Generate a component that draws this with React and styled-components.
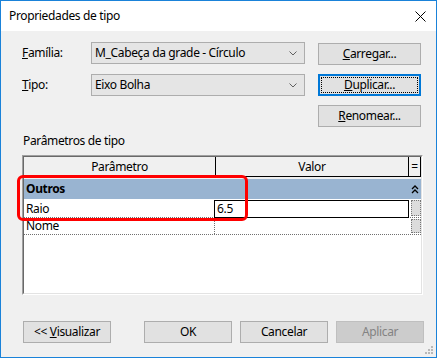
import React from 'react';
import styled, { createGlobalStyle } from 'styled-components';

const GlobalStyle = createGlobalStyle`
  html, body { margin: 0; padding: 0; background: #f0f0f0; }
  body {
    font-family: "Noto Sans", "Segoe UI", sans-serif;
    font-size: 12px;
    letter-spacing: -0.35px;
    color: #000;
  }
  #root { width: 437px; height: 358px; }
  * { box-sizing: border-box; }
`;

const Window = styled.div`
  position: relative;
  width: 437px;
  height: 358px;
  border: 1px solid #1a82d9;
  background: #f0f0f0;
  display: flex;
  flex-direction: column;
`;

const TitleBar = styled.div`
  height: 30px;
  flex: none;
  background: #fff;
  display: flex;
  align-items: center;
  justify-content: space-between;
  padding: 0 10px 0 8px;
`;

const Title = styled.span`
  font-size: 12px;
  line-height: 16px;
`;

const CloseIcon = styled.svg`
  width: 11px;
  height: 11px;
  display: block;
`;

const Body = styled.div`
  flex: 1;
  display: flex;
  flex-direction: column;
  align-items: flex-start;
  padding: 11px 0 0 21px;
`;

const TopRows = styled.div`
  display: flex;
  flex-direction: column;
  gap: 10px;
  width: 399px;
`;

const FormRow = styled.div`
  display: flex;
  align-items: center;
  height: 22px;
  margin-top: ${p => p.$mt || 0}px;
`;

const Label = styled.span`
  flex: none;
  width: 69px;
  line-height: 16px;
`;

const Combo = styled.div`
  flex: none;
  width: 214px;
  height: 22px;
  border: 1px solid #adadad;
  background: #e5e5e5;
  display: flex;
  align-items: center;
  justify-content: space-between;
  padding: 0 7px 0 3px;
  line-height: 16px;
  white-space: nowrap;
  overflow: hidden;
`;

const Chevron = styled.svg`
  flex: none;
  width: 8px;
  height: 5px;
  display: block;
`;

const Button = styled.button`
  flex: none;
  height: 22px;
  width: ${p => p.$w || 103}px;
  margin-left: ${p => p.$ml || 0}px;
  margin-top: ${p => p.$mt || 0}px;
  padding: 0;
  font: inherit;
  letter-spacing: inherit;
  line-height: 16px;
  color: ${p => (p.$disabled ? '#838383' : '#000')};
  background: ${p => (p.$disabled ? '#cccccc' : '#e1e1e1')};
  border: 1px solid ${p => (p.$disabled ? '#bfbfbf' : p.$default ? '#0078d7' : '#adadad')};
  box-shadow: ${p => (p.$default ? 'inset 0 0 0 1px #0078d7' : 'none')};
  position: relative;
  display: flex;
  align-items: center;
  justify-content: center;
  cursor: default;
`;

const FocusRing = styled.span`
  position: absolute;
  inset: 2px;
  border: 1px dotted #000;
  pointer-events: none;
`;

const SectionLabel = styled.div`
  line-height: 16px;
  margin: 6px 0 6px 1px;
`;

const TableFrame = styled.div`
  position: relative;
  width: 401px;
  height: 140px;
  border: 1px solid;
  border-color: #a0a0a0 #ffffff #ffffff #a0a0a0;
`;

const TableInner = styled.div`
  height: 100%;
  border: 1px solid;
  border-color: #696969 #e3e3e3 #e3e3e3 #696969;
  background: #fff;
  display: flex;
  flex-direction: column;
`;

const HeaderRow = styled.div`
  display: grid;
  grid-template-columns: 192px 193px 12px;
  height: 20px;
  background: #f0f0f0;
  flex: none;
`;

const HeaderCell = styled.div`
  display: flex;
  align-items: center;
  justify-content: center;
  line-height: 16px;
  border-bottom: 1px solid #000;
  border-right: 1px solid #000;
`;

const Gap = styled.div`
  height: 2px;
  background: #f0f0f0;
  flex: none;
`;

const GroupRow = styled.div`
  display: grid;
  grid-template-columns: 385px 12px;
  height: 20px;
  background: #99b4d1;
  flex: none;
  align-items: center;
`;

const GroupTitle = styled.span`
  font-weight: 700;
  padding-left: 2px;
  line-height: 16px;
`;

const Collapse = styled.svg`
  width: 8px;
  height: 9px;
  display: block;
  margin-left: 2px;
`;

const DataRow = styled.div`
  display: grid;
  grid-template-columns: 191px 194px 12px;
  height: ${p => p.$h}px;
  flex: none;
  border-bottom: 1px dotted #707070;
`;

const NameCell = styled.div`
  display: flex;
  align-items: center;
  padding-left: 2px;
  line-height: 16px;
  border-right: ${p => (p.$divider ? '1px dotted #707070' : '1px solid transparent')};
`;

const ValueCell = styled.div`
  display: flex;
  align-items: center;
  line-height: 16px;
  padding-left: 2px;
  ${p => p.$editing && `
    border: 1px solid #000;
    margin: 1px 0 0 -1px;
    height: 18px;
  `}
`;

const Gutter = styled.div`
  margin: 1px 0 1px 2px;
  width: 10px;
  height: ${p => p.$h}px;
  background: #dcdcdc;
  border: 1px dotted #777;
`;

const Highlight = styled.div`
  position: absolute;
  left: -6px;
  top: 19px;
  width: 231px;
  height: 46px;
  border: 3px solid #ff0000;
  border-radius: 6px;
  pointer-events: none;
`;

const Footer = styled.div`
  display: flex;
  margin-top: 26px;
  padding-left: 1px;
`;

const Grip = styled.svg`
  position: absolute;
  right: 3px;
  bottom: 3px;
  width: 8px;
  height: 8px;
`;

function ComboArrow() {
  return (
    <Chevron viewBox="0 0 8 5">
      <path d="M0.5 0.5 L4 4 L7.5 0.5" stroke="#606060" strokeWidth="1" fill="none" />
    </Chevron>
  );
}

export default function App() {
  return (
    <>
      <GlobalStyle />
      <Window>
        <TitleBar>
          <Title>Propriedades de tipo</Title>
          <CloseIcon viewBox="0 0 11 11">
            <path d="M0.5 0.5 L10.5 10.5 M10.5 0.5 L0.5 10.5" stroke="#000" strokeWidth="1" fill="none" />
          </CloseIcon>
        </TitleBar>
        <Body>
          <TopRows>
            <FormRow>
              <Label><u>F</u>amília:</Label>
              <Combo>
                <span>M_Cabeça da grade - Círculo</span>
                <ComboArrow />
              </Combo>
              <Button $ml={13} $mt={2}><span><u>C</u>arregar...</span></Button>
            </FormRow>
            <FormRow>
              <Label><u>T</u>ipo:</Label>
              <Combo>
                <span>Eixo Bolha</span>
                <ComboArrow />
              </Combo>
              <Button $ml={13} $default><FocusRing /><span><u>D</u>uplicar...</span></Button>
            </FormRow>
            <FormRow $mt={-1}>
              <Button $ml={296}><span><u>R</u>enomear...</span></Button>
            </FormRow>
          </TopRows>

          <SectionLabel>Parâmetros de tipo</SectionLabel>

          <TableFrame>
            <TableInner>
              <HeaderRow>
                <HeaderCell>Parâmetro</HeaderCell>
                <HeaderCell>Valor</HeaderCell>
                <HeaderCell>=</HeaderCell>
              </HeaderRow>
              <Gap />
              <GroupRow>
                <GroupTitle>Outros</GroupTitle>
                <Collapse viewBox="0 0 8 9">
                  <path d="M1 4 L4 1 L7 4 M1 8 L4 5 L7 8" stroke="#000" strokeWidth="1.3" fill="none" />
                </Collapse>
              </GroupRow>
              <DataRow $h={19}>
                <NameCell>Raio</NameCell>
                <ValueCell $editing>6.5</ValueCell>
                <Gutter $h={16} />
              </DataRow>
              <DataRow $h={17}>
                <NameCell $divider>Nome</NameCell>
                <ValueCell />
                <Gutter $h={14} />
              </DataRow>
            </TableInner>
            <Highlight />
          </TableFrame>

          <Footer>
            <Button $w={88}><span>&lt;&lt; <u>V</u>isualizar</span></Button>
            <Button $w={88} $ml={33}>OK</Button>
            <Button $w={88} $ml={8}>Cancelar</Button>
            <Button $w={88} $ml={8} $disabled>Aplicar</Button>
          </Footer>
        </Body>
        <Grip viewBox="0 0 8 8">
          <rect x="6" y="0" width="2" height="2" fill="#b8b8b8" />
          <rect x="3" y="3" width="2" height="2" fill="#b8b8b8" />
          <rect x="6" y="3" width="2" height="2" fill="#b8b8b8" />
          <rect x="0" y="6" width="2" height="2" fill="#b8b8b8" />
          <rect x="3" y="6" width="2" height="2" fill="#b8b8b8" />
          <rect x="6" y="6" width="2" height="2" fill="#b8b8b8" />
        </Grip>
      </Window>
    </>
  );
}
